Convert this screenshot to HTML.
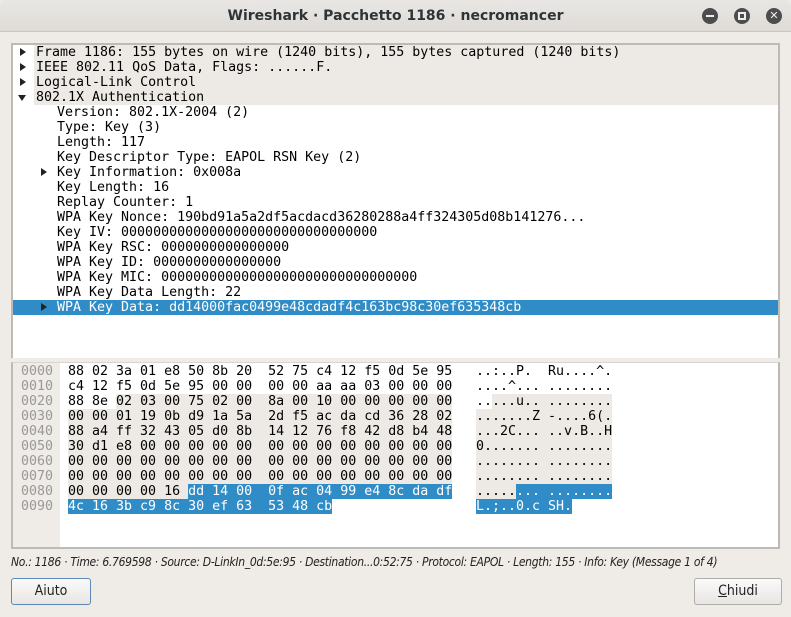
<!DOCTYPE html>
<html><head><meta charset="utf-8"><style>
*{margin:0;padding:0;box-sizing:border-box}
body{width:791px;height:617px;background:#efebe7;position:relative;overflow:hidden;font-family:"DejaVu Sans",sans-serif}
#title{position:absolute;left:0;top:0;width:791px;height:32px;background:linear-gradient(#e9e7e4,#dedbd7);border-bottom:1px solid #c8c4bf;border-radius:6px 6px 0 0;text-align:center;font:bold 14px "DejaVu Sans",sans-serif;line-height:32px;color:#2e3436}
.wb{position:absolute;top:8px;width:16px;height:16px;border-radius:50%;background:#4d4d4d}
.mono{font-family:"DejaVu Sans Mono",monospace;font-size:13.3px;white-space:pre;line-height:15px;color:#000}
#tree{position:absolute;left:11px;top:43px;width:769px;height:315px;background:#fff;border:2px solid #bdb9b4;border-bottom:none;overflow:hidden}
.r{position:absolute;left:0;width:765px;height:15px}
.tri{position:absolute;width:0;height:0}
#hex{position:absolute;left:11px;top:362px;width:769px;height:187px;background:#fff;border:2px solid #bdb9b4;border-top:1px solid #d8d4cf;overflow:hidden}
#offs{position:absolute;left:0;top:0;width:47px;height:186px;background:#efebe7}
.g{background:#edeae6}.b{background:#308cc6;color:#fff}
.btn{position:absolute;top:578px;height:27px;border:1px solid #b0aca7;border-radius:3px;background:linear-gradient(#fafafa,#e8e6e3);font:14px "DejaVu Sans Condensed","DejaVu Sans",sans-serif;text-align:center;line-height:25px;color:#222}
</style></head><body>
<div id="title">Wireshark · Pacchetto 1186 · necromancer</div>
<div class="wb" style="left:702px"><div style="position:absolute;left:4px;top:7px;width:8px;height:2px;background:#eee"></div></div>
<div class="wb" style="left:734px"><div style="position:absolute;left:4px;top:4px;width:8px;height:8px;border:2px solid #eee"></div></div>
<div class="wb" style="left:766px;color:#eee;font-size:11px;line-height:16px;text-align:center;font-weight:bold">✕</div>

<div id="tree" class="mono">
<div class="r g" style="top:0;left:21px;padding-left:2px">Frame 1186: 155 bytes on wire (1240 bits), 155 bytes captured (1240 bits)</div>
<div class="r g" style="top:15px;left:21px;padding-left:2px">IEEE 802.11 QoS Data, Flags: ......F.</div>
<div class="r g" style="top:30px;left:21px;padding-left:2px">Logical-Link Control</div>
<div class="r g" style="top:45px;left:21px;padding-left:2px">802.1X Authentication</div>
<div class="tri" style="left:7px;top:3px;border-left:6px solid #222;border-top:4.5px solid transparent;border-bottom:4.5px solid transparent"></div>
<div class="tri" style="left:7px;top:18px;border-left:6px solid #222;border-top:4.5px solid transparent;border-bottom:4.5px solid transparent"></div>
<div class="tri" style="left:7px;top:33px;border-left:6px solid #222;border-top:4.5px solid transparent;border-bottom:4.5px solid transparent"></div>
<div class="tri" style="left:5px;top:50px;border-top:6px solid #222;border-left:4.5px solid transparent;border-right:4.5px solid transparent"></div>
<div class="r" style="top:60px;left:44px">Version: 802.1X-2004 (2)</div>
<div class="r" style="top:75px;left:44px">Type: Key (3)</div>
<div class="r" style="top:90px;left:44px">Length: 117</div>
<div class="r" style="top:105px;left:44px">Key Descriptor Type: EAPOL RSN Key (2)</div>
<div class="r" style="top:120px;left:44px">Key Information: 0x008a</div>
<div class="tri" style="left:28px;top:123px;border-left:6px solid #222;border-top:4.5px solid transparent;border-bottom:4.5px solid transparent"></div>
<div class="r" style="top:135px;left:44px">Key Length: 16</div>
<div class="r" style="top:150px;left:44px">Replay Counter: 1</div>
<div class="r" style="top:165px;left:44px">WPA Key Nonce: 190bd91a5a2df5acdacd36280288a4ff324305d08b141276...</div>
<div class="r" style="top:180px;left:44px">Key IV: 00000000000000000000000000000000</div>
<div class="r" style="top:195px;left:44px">WPA Key RSC: 0000000000000000</div>
<div class="r" style="top:210px;left:44px">WPA Key ID: 0000000000000000</div>
<div class="r" style="top:225px;left:44px">WPA Key MIC: 00000000000000000000000000000000</div>
<div class="r" style="top:240px;left:44px">WPA Key Data Length: 22</div>
<div class="r b" style="top:255px;left:0;padding-left:44px">WPA Key Data: dd14000fac0499e48cdadf4c163bc98c30ef635348cb</div>
<div class="tri" style="left:28px;top:258px;border-left:6px solid #222;border-top:4.5px solid transparent;border-bottom:4.5px solid transparent"></div>
</div>

<div id="hex" class="mono">
<div id="offs"></div>
<div style="position:absolute;left:8px;top:1px;color:#999">0000
0010
0020
0030
0040
0050
0060
0070
0080
0090</div>
<div style="position:absolute;left:55px;top:1px">88 02 3a 01 e8 50 8b 20  52 75 c4 12 f5 0d 5e 95
c4 12 f5 0d 5e 95 00 00  00 00 aa aa 03 00 00 00
88 8e <span class="g">02 03 00 75 02 00  8a 00 10 00 00 00 00 00</span>
<span class="g">00 00 01 19 0b d9 1a 5a  2d f5 ac da cd 36 28 02</span>
<span class="g">88 a4 ff 32 43 05 d0 8b  14 12 76 f8 42 d8 b4 48</span>
<span class="g">30 d1 e8 00 00 00 00 00  00 00 00 00 00 00 00 00</span>
<span class="g">00 00 00 00 00 00 00 00  00 00 00 00 00 00 00 00</span>
<span class="g">00 00 00 00 00 00 00 00  00 00 00 00 00 00 00 00</span>
<span class="g">00 00 00 00 16 </span><span class="b">dd 14 00  0f ac 04 99 e4 8c da df</span>
<span class="b">4c 16 3b c9 8c 30 ef 63  53 48 cb</span></div>
<div style="position:absolute;left:463px;top:1px">..:..P.  Ru....^.
....^... ........
..<span class="g">...u.. ........</span>
<span class="g">.......Z -....6(.</span>
<span class="g">...2C... ..v.B..H</span>
<span class="g">0....... ........</span>
<span class="g">........ ........</span>
<span class="g">........ ........</span>
<span class="g">.....</span><span class="b">... ........</span>
<span class="b">L.;..0.c SH.</span></div>
</div>

<div style="position:absolute;left:11px;top:555px;font:italic 12px 'DejaVu Sans Condensed','DejaVu Sans',sans-serif;color:#222;white-space:nowrap;letter-spacing:-0.3px">No.: 1186 · Time: 6.769598 · Source: D-LinkIn_0d:5e:95 · Destination...0:52:75 · Protocol: EAPOL · Length: 155 · Info: Key (Message 1 of 4)</div>
<div class="btn" style="left:11px;width:80px;border-color:#5a8ab5">Aiuto</div>
<div class="btn" style="left:694px;width:88px"><u>C</u>hiudi</div>
</body></html>
